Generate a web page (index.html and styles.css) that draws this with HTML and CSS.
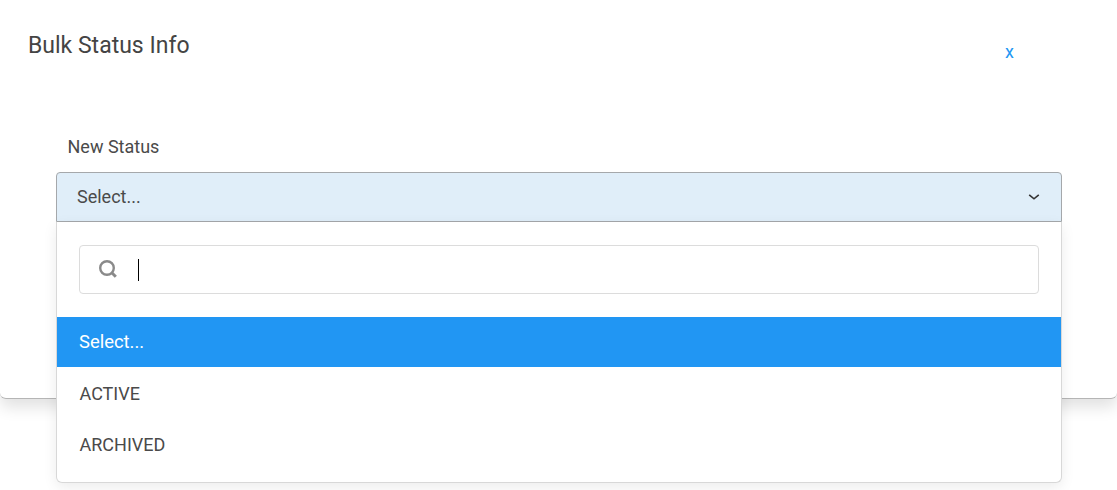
FILE: index.html
```html
<!DOCTYPE html>
<html lang="en">
<head>
    <meta charset="UTF-8">
    <meta name="viewport" content="width=device-width, initial-scale=1.0">
    <title>Bulk Status Info</title>
    <link rel="stylesheet" href="styles.css">
</head>
<body>
    <div class="modal">
        <div class="modal-head">
            <h2 class="modal-title">Bulk Status Info</h2>
            <a class="modal-close" href="#">x</a>
        </div>
        <div class="field">
            <label class="field-label">New Status</label>
            <div class="select">
                <div class="select-value">
                    <span class="select-text">Select...</span>
                    <svg class="select-arrow" width="12" height="8" viewBox="0 0 12 8"><path d="M1.2 1.8l4.8 4 4.8-4" fill="none" stroke="#333" stroke-width="1.6"/></svg>
                </div>
                <div class="select-drop">
                    <div class="search">
                        <svg class="search-icon" width="20" height="20" viewBox="0 0 20 20"><circle cx="9" cy="9" r="6.8" fill="none" stroke="#8a8a8a" stroke-width="2.4"/><path d="M13.8 13.8l4 4" fill="none" stroke="#8a8a8a" stroke-width="3"/></svg>
                        <span class="search-caret"></span>
                    </div>
                    <ul class="options">
                        <li class="option option-active">Select...</li>
                        <li class="option">ACTIVE</li>
                        <li class="option">ARCHIVED</li>
                    </ul>
                </div>
            </div>
        </div>
    </div>
</body>
</html>
```

FILE: styles.css
```css
*{
    margin: 0;
    padding: 0;
    box-sizing: border-box;
}
body{
    background-color: #fff;
    font-family: Roboto, "Liberation Sans", sans-serif;
    color: #4a4a4a;
    overflow: hidden;
    height: 490px;
}
.modal{
    height: 399px;
    background-color: #fff;
    border-bottom: 1px solid #b5b5b5;
    border-radius: 0 0 6px 6px;
    box-shadow: 0 8px 16px rgba(0,0,0,.12);
    padding: 31px 55px 0 56px;
}
.modal-head{
    display: flex;
    justify-content: space-between;
    height: 106px;
    padding-right: 48px;
}
.modal-title{
    font-size: 23px;
    font-weight: 400;
    line-height: 30px;
    margin-left: -28px;
    color: #444;
}
.modal-close{
    font-size: 18px;
    line-height: 20px;
    margin-top: 11px;
    color: #2196f3;
    text-decoration: none;
}
.field-label{
    display: block;
    font-size: 18px;
    line-height: 20px;
    padding-left: 11.5px;
    margin-bottom: 15px;
}
.select{
    position: relative;
}
.select-value{
    display: flex;
    justify-content: space-between;
    align-items: center;
    height: 50px;
    padding: 0 21px 0 20px;
    background-color: #e0eef9;
    border: 1px solid #a5a8ab;
    border-radius: 4px 4px 0 0;
    font-size: 18px;
}
.select-text{
    margin-top: -2px;
}
.select-drop{
    position: absolute;
    top: 50px;
    left: 0;
    right: 0;
    height: 261px;
    background-color: #fff;
    border: 1px solid #d8d8d8;
    border-top: 0;
    border-radius: 0 0 6px 6px;
    box-shadow: 0 4px 14px rgba(0,0,0,.08);
    padding-top: 23px;
}
.search{
    display: flex;
    align-items: center;
    height: 49px;
    margin: 0 22px;
    padding-left: 18px;
    border: 1px solid #dcdcdc;
    border-radius: 4px;
}
.search-icon{
    margin-top: -2px;
}
.search-caret{
    width: 1px;
    height: 22px;
    margin-left: 20px;
    background-color: #000;
}
.options{
    list-style-type: none;
    margin-top: 23px;
}
.option{
    height: 51px;
    line-height: 50px;
    padding: 0 0 0 22.5px;
    font-size: 18px;
}
.option-active{
    height: 50px;
    padding: 0 0 0 22px;
    background-color: #2196f3;
    color: #fff;
    font-size: 18.4px;
    margin-bottom: 2px;
}
```
